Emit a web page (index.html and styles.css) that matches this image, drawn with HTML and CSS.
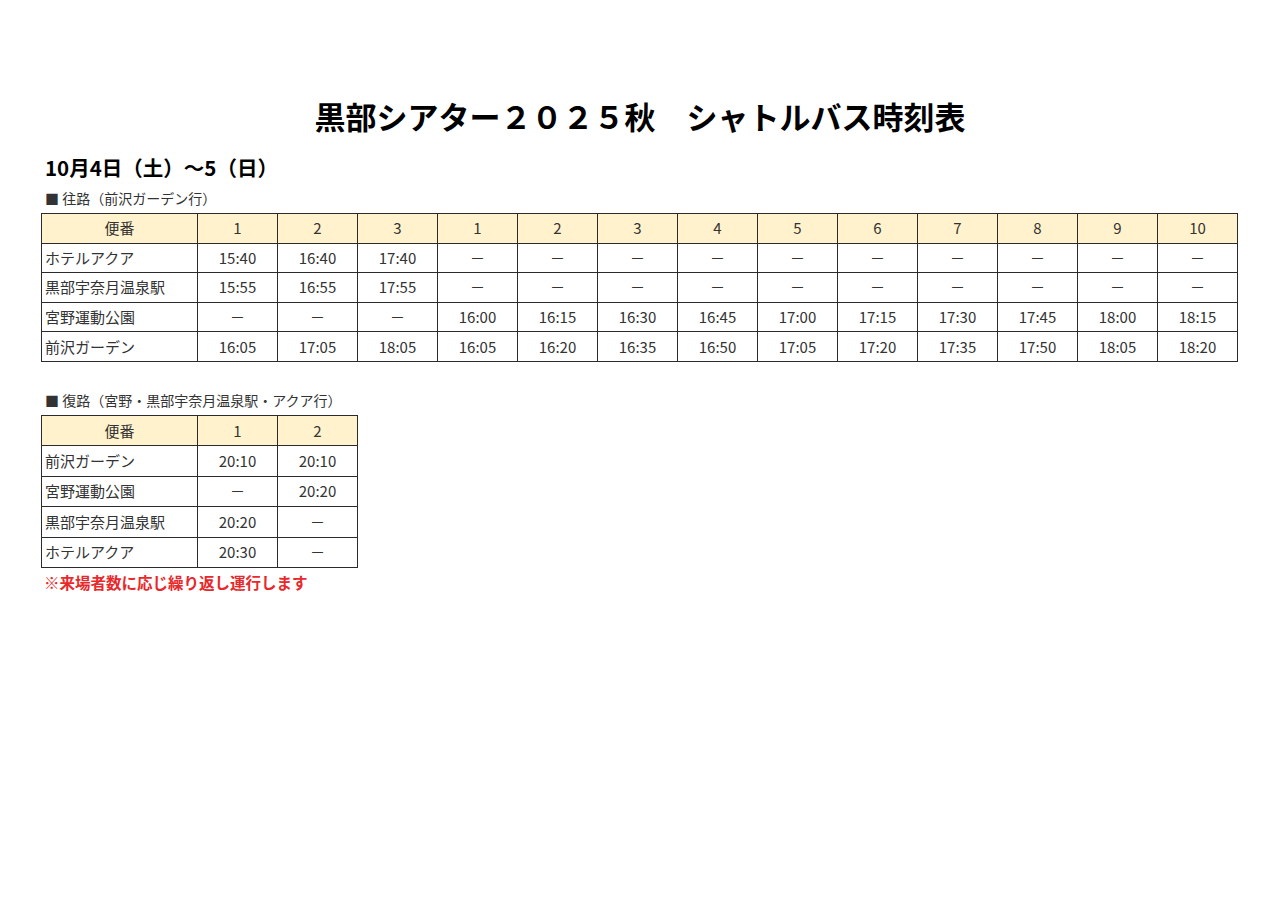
FILE: index.html
```html
<!DOCTYPE html>
<html lang="ja">
<head>
<meta charset="utf-8">
<title>黒部シアター２０２５秋　シャトルバス時刻表</title>
<link rel="stylesheet" href="styles.css">
</head>
<body>
<main class="page">
  <h1 class="title">黒部シアター２０２５秋　シャトルバス時刻表</h1>
  <h2 class="date">10月4日（土）～5（日）</h2>

  <p class="label">■ 往路（前沢ガーデン行）</p>
  <table class="tt tt-out">
    <tr class="head"><td class="name c">便番</td><td>1</td><td>2</td><td>3</td><td>1</td><td>2</td><td>3</td><td>4</td><td>5</td><td>6</td><td>7</td><td>8</td><td>9</td><td>10</td></tr>
    <tr><td class="name">ホテルアクア</td><td>15:40</td><td>16:40</td><td>17:40</td><td>－</td><td>－</td><td>－</td><td>－</td><td>－</td><td>－</td><td>－</td><td>－</td><td>－</td><td>－</td></tr>
    <tr><td class="name">黒部宇奈月温泉駅</td><td>15:55</td><td>16:55</td><td>17:55</td><td>－</td><td>－</td><td>－</td><td>－</td><td>－</td><td>－</td><td>－</td><td>－</td><td>－</td><td>－</td></tr>
    <tr><td class="name">宮野運動公園</td><td>－</td><td>－</td><td>－</td><td>16:00</td><td>16:15</td><td>16:30</td><td>16:45</td><td>17:00</td><td>17:15</td><td>17:30</td><td>17:45</td><td>18:00</td><td>18:15</td></tr>
    <tr><td class="name">前沢ガーデン</td><td>16:05</td><td>17:05</td><td>18:05</td><td>16:05</td><td>16:20</td><td>16:35</td><td>16:50</td><td>17:05</td><td>17:20</td><td>17:35</td><td>17:50</td><td>18:05</td><td>18:20</td></tr>
  </table>

  <p class="label label-back">■ 復路（宮野・黒部宇奈月温泉駅・アクア行）</p>
  <table class="tt tt-back">
    <tr class="head"><td class="name c">便番</td><td>1</td><td>2</td></tr>
    <tr><td class="name">前沢ガーデン</td><td>20:10</td><td>20:10</td></tr>
    <tr><td class="name">宮野運動公園</td><td>－</td><td>20:20</td></tr>
    <tr><td class="name">黒部宇奈月温泉駅</td><td>20:20</td><td>－</td></tr>
    <tr><td class="name">ホテルアクア</td><td>20:30</td><td>－</td></tr>
  </table>
  <p class="note">※来場者数に応じ繰り返し運行します</p>
</main>
</body>
</html>
```
FILE: styles.css
```css
html, body {
  margin: 0;
  padding: 0;
  background: #ffffff;
}
body {
  font-family: "Noto Sans CJK JP", "Noto Sans", sans-serif;
  color: #1a1a1a;
}
.page {
  padding: 96px 0 0 41px;
  width: 1197px;
}
.title {
  margin: 0;
  margin-left: -41px;
  width: 1280px;
  text-align: center;
  font-size: 31px;
  line-height: 40px;
  font-weight: 700;
  color: #000;
}
.date {
  margin: 17px 0 0 4px;
  font-size: 20.5px;
  line-height: 28px;
  font-weight: 700;
  color: #000;
}
.label {
  margin: 7px 0 5px 4px;
  font-size: 14px;
  line-height: 20px;
  color: #333;
}
.label-back {
  margin-top: 28px;
}
.tt {
  border-collapse: collapse;
  font-size: 15px;
  color: #333;
}
.tt td {
  border: 1px solid #2b2b2b;
  width: 79px;
  padding: 0;
  text-align: center;
  line-height: 20px;
}
.tt-out td {
  height: 28.6px;
}
.tt-back td {
  height: 29.4px;
}
.tt td.name {
  width: 152px;
  text-align: left;
  padding-left: 3px;
}
.tt td.name.c {
  text-align: center;
  padding-left: 0;
}
.tt .head td {
  background: #fff2cc;
}
.note {
  margin: 4px 0 0 3px;
  font-size: 15.5px;
  line-height: 20px;
  font-weight: 700;
  color: #e8282b;
}
```
